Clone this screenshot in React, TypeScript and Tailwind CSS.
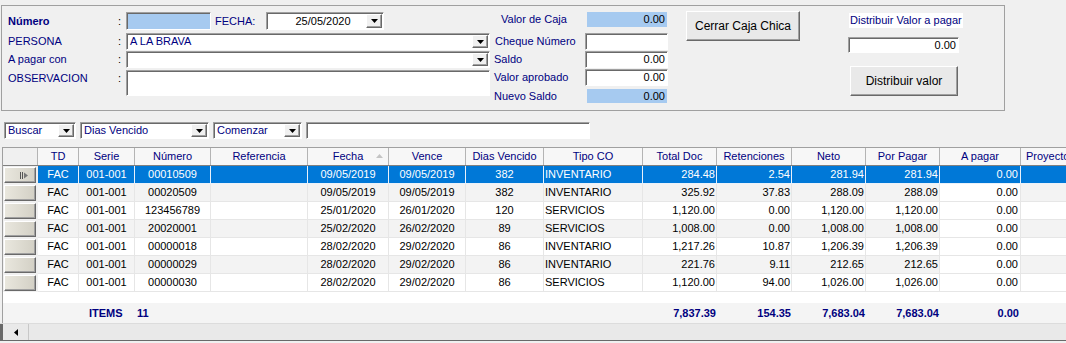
import React from "react";

const sunken =
  "border border-t-[#a0a0a0] border-l-[#a0a0a0] border-b-white border-r-white shadow-[inset_1px_1px_0_#696969]";
const raised =
  "border border-t-white border-l-white border-b-[#696969] border-r-[#696969] shadow-[inset_-1px_-1px_0_#a0a0a0]";

function DropBtn() {
  return (
    <span className={`flex h-full w-[16px] shrink-0 items-center justify-center bg-[#f0f0f0] ${raised}`}>
      <svg width="7" height="4" viewBox="0 0 7 4">
        <path d="M0 0h7L3.5 4z" fill="#000" />
      </svg>
    </span>
  );
}

function Combo({ w, value, tone = "text-[#000080]", center = false }: { w: string; value?: string; tone?: string; center?: boolean }) {
  return (
    <div className={`flex h-full ${w} items-stretch bg-white p-[1px] ${sunken}`}>
      <span className={`flex flex-1 items-center px-[2px] ${tone} ${center ? "justify-center" : ""}`}>{value}</span>
      <DropBtn />
    </div>
  );
}

type Col = { h: string; w: string; a: string };
const cols: Col[] = [
  { h: "", w: "w-[35px]", a: "" },
  { h: "TD", w: "w-[41px]", a: "justify-center" },
  { h: "Serie", w: "w-[56px]", a: "justify-center" },
  { h: "Número", w: "w-[76px]", a: "justify-center" },
  { h: "Referencia", w: "w-[97px]", a: "justify-start pl-[2px]" },
  { h: "Fecha", w: "w-[81px]", a: "justify-center" },
  { h: "Vence", w: "w-[77px]", a: "justify-center" },
  { h: "Dias Vencido", w: "w-[78px]", a: "justify-center" },
  { h: "Tipo CO", w: "w-[99px]", a: "justify-start pl-[1px]" },
  { h: "Total Doc", w: "w-[74px]", a: "justify-end pr-[1px]" },
  { h: "Retenciones", w: "w-[75px]", a: "justify-end pr-[1px]" },
  { h: "Neto", w: "w-[74px]", a: "justify-end pr-[1px]" },
  { h: "Por Pagar", w: "w-[74px]", a: "justify-end pr-[1px]" },
  { h: "A pagar", w: "w-[81px]", a: "justify-end pr-[2px]" },
  { h: "Proyecto", w: "w-[90px]", a: "justify-start pl-[2px]" },
];

const rows = [
  ["FAC", "001-001", "00010509", "", "09/05/2019", "09/05/2019", "382", "INVENTARIO", "284.48", "2.54", "281.94", "281.94", "0.00", ""],
  ["FAC", "001-001", "00020509", "", "09/05/2019", "09/05/2019", "382", "INVENTARIO", "325.92", "37.83", "288.09", "288.09", "0.00", ""],
  ["FAC", "001-001", "123456789", "", "25/01/2020", "26/01/2020", "120", "SERVICIOS", "1,120.00", "0.00", "1,120.00", "1,120.00", "0.00", ""],
  ["FAC", "001-001", "20020001", "", "25/02/2020", "26/02/2020", "89", "SERVICIOS", "1,008.00", "0.00", "1,008.00", "1,008.00", "0.00", ""],
  ["FAC", "001-001", "00000018", "", "28/02/2020", "29/02/2020", "86", "INVENTARIO", "1,217.26", "10.87", "1,206.39", "1,206.39", "0.00", ""],
  ["FAC", "001-001", "00000029", "", "28/02/2020", "29/02/2020", "86", "INVENTARIO", "221.76", "9.11", "212.65", "212.65", "0.00", ""],
  ["FAC", "001-001", "00000030", "", "28/02/2020", "29/02/2020", "86", "SERVICIOS", "1,120.00", "94.00", "1,026.00", "1,026.00", "0.00", ""],
];

// footer cells from Referencia onwards
const totals = ["", "", "", "", "", "7,837.39", "154.35", "7,683.04", "7,683.04", "0.00", ""];

function RowSelector({ current }: { current?: boolean }) {
  return (
    <div className="flex h-full w-[35px] shrink-0 items-center py-[1px] pl-[1px] pr-[2px]">
      <div className={`flex h-full flex-1 items-center justify-end bg-gradient-to-r from-[#e9e7de] to-[#d3d0c5] pr-[6px] ${raised}`}>
        {current && (
          <svg width="9" height="7" viewBox="0 0 9 7">
            <path d="M0.5 0v7M2.5 0v7" stroke="#555" strokeWidth="1" />
            <path d="M4 0.5l4 3-4 3z" fill="#777" />
          </svg>
        )}
      </div>
    </div>
  );
}

export default function App() {
  return (
    <div className="h-[343px] w-[1066px] overflow-hidden bg-[#f0f0f0] font-['Liberation_Sans',Arial,sans-serif] text-[11px] leading-none text-black">
      {/* top panel */}
      <div className="ml-[1px] mt-[5px] flex h-[106px] w-[1004px] border border-[#a0a0a0]">
        <div className="flex w-[490px] shrink-0 flex-col pl-[6px] pt-[6px]">
          <div className="flex h-[18px] items-center">
            <span className="w-[110px] font-bold text-[#000080]">Número</span>
            <span className="w-[8px] text-black">:</span>
            <div className={`h-full w-[85px] bg-[#a6caf0] ${sunken}`} />
            <span className="ml-[4px] w-[51px] text-[#000080]">FECHA:</span>
            <Combo w="w-[118px]" value="25/05/2020" tone="text-black pl-[14px]" center />
          </div>
          <div className="mt-[3px] flex h-[17px] items-center">
            <span className="w-[110px] text-[#000080]">PERSONA</span>
            <span className="w-[8px]">:</span>
            <Combo w="w-[364px]" value="A LA BRAVA" />
          </div>
          <div className="mt-[1px] flex h-[17px] items-center">
            <span className="w-[110px] text-[#000080]">A pagar con</span>
            <span className="w-[8px]">:</span>
            <Combo w="w-[364px]" />
          </div>
          <div className="mt-[2px] flex h-[26px] items-start">
            <span className="mt-[3px] w-[110px] text-[#000080]">OBSERVACION</span>
            <span className="mt-[3px] w-[8px]">:</span>
            <div className={`h-full w-[364px] bg-white ${sunken}`} />
          </div>
        </div>

        <div className="flex w-[194px] shrink-0 flex-col pt-[6px] text-[#000080]">
          <div className="flex h-[15px] items-center">
            <span className="w-[95px] pl-[9px]">Valor de Caja</span>
            <span className="flex h-full w-[80px] items-center justify-end bg-[#a6caf0] pr-[2px] text-black">0.00</span>
          </div>
          <div className="mt-[6px] flex h-[17px] items-center">
            <span className="w-[93px] pl-[3px]">Cheque Número</span>
            <div className={`h-full w-[83px] bg-white ${sunken}`} />
          </div>
          <div className="mt-[1px] flex h-[17px] items-center">
            <span className="w-[93px] pl-[2px]">Saldo</span>
            <span className={`flex h-full w-[83px] items-center justify-end bg-white pr-[2px] text-black ${sunken}`}>0.00</span>
          </div>
          <div className="mt-[1px] flex h-[17px] items-center">
            <span className="w-[93px] pl-[2px]">Valor aprobado</span>
            <span className={`flex h-full w-[83px] items-center justify-end bg-white pr-[2px] text-black ${sunken}`}>0.00</span>
          </div>
          <div className="mt-[3px] flex h-[14px] items-center">
            <span className="w-[95px] pl-[2px]">Nuevo Saldo</span>
            <span className="flex h-full w-[80px] items-center justify-end bg-[#a6caf0] pr-[2px] text-black">0.00</span>
          </div>
        </div>

        <div className="w-[162px] shrink-0 pt-[5px]">
          <button className={`flex h-[30px] w-[114px] items-center justify-center bg-[#e9e9e9] text-[12px] text-black ${raised}`}>
            Cerrar Caja Chica
          </button>
        </div>

        <div className="flex w-[120px] shrink-0 flex-col pt-[7px]">
          <span className="ml-[1px] flex h-[15px] w-fit items-center bg-white px-[1px] text-[#000080]">Distribuir Valor a pagar</span>
          <span className={`mt-[9px] flex h-[16px] w-[111px] items-center justify-end bg-white pr-[2px] ${sunken}`}>0.00</span>
          <button className={`ml-[2px] mt-[13px] flex h-[30px] w-[108px] items-center justify-center bg-[#e9e9e9] text-[12px] text-black ${raised}`}>
            Distribuir valor
          </button>
        </div>
      </div>

      {/* filter row */}
      <div className="mt-[11px] flex h-[17px] gap-[4px] pl-[4px]">
        <Combo w="w-[72px]" value="Buscar" />
        <Combo w="w-[129px]" value="Dias Vencido" />
        <Combo w="w-[89px]" value="Comenzar" />
        <div className={`h-full w-[284px] bg-white ${sunken}`} />
      </div>

      {/* grid */}
      <div className="mt-[8px] flex h-[194px] flex-col">
        <div className="ml-[2px] flex flex-1 flex-col border-l border-t border-[#a0a0a0] bg-white">
          <div className="flex h-[18px] border-b border-[#808080] bg-[#f7f7f7] text-[#000080]">
            {cols.map((c, i) => (
              <div
                key={i}
                className={`relative flex h-full shrink-0 items-center whitespace-nowrap border-r border-[#b4b4b4] ${c.w} ${i === 0 ? "bg-[#f0f0f0]" : ""} ${c.h === "Proyecto" ? "justify-start pl-[5px]" : "justify-center"}`}
              >
                {c.h}
                {c.h === "Fecha" && (
                  <svg className="absolute right-[5px] top-[6px]" width="7" height="4" viewBox="0 0 7 4">
                    <path d="M0 4h7L3.5 0z" fill="#c4c4c4" />
                  </svg>
                )}
              </div>
            ))}
          </div>

          {rows.map((r, ri) => {
            const sel = ri === 0;
            const base = sel ? "bg-[#0078d7] text-white" : ri % 2 === 1 ? "bg-[#f3f3f3]" : "bg-white";
            return (
              <div key={ri} className="flex h-[18px]">
                <div className="bg-[#f0f0f0]">
                  <RowSelector current={sel} />
                </div>
                {r.map((v, ci) => {
                  const c = cols[ci + 1];
                  const bg = !sel && ci === 12 ? "bg-white" : base;
                  return (
                    <div key={ci} className={`flex h-full shrink-0 items-center whitespace-nowrap border-b border-r ${sel ? "border-[#e9f1fa]" : "border-[#e6e6e6]"} ${c.w} ${c.a} ${bg}`}>
                      {v}
                    </div>
                  );
                })}
              </div>
            );
          })}

          <div className="h-[11px] bg-white" />

          <div className="flex h-[20px] bg-[#f4f4f4] font-bold text-[#000080]">
            <div className="w-[35px] shrink-0" />
            <div className="w-[41px] shrink-0" />
            <div className="flex w-[56px] shrink-0 items-center pl-[10px]">ITEMS</div>
            <div className="flex w-[76px] shrink-0 items-center pl-[2px]">11</div>
            {totals.map((v, i) => (
              <div key={i} className={`flex h-full shrink-0 items-center ${cols[i + 4].w} ${cols[i + 4].a}`}>
                {v}
              </div>
            ))}
          </div>
        </div>

        <div className="flex h-[17px] border-t border-[#dcdcdc] bg-[#e9e9e9]">
          <div className="w-[3px] bg-[#696969]" />
          <div className="flex w-[26px] items-center justify-center border-r border-[#c8c8c8]">
            <svg width="4" height="7" viewBox="0 0 4 7">
              <path d="M4 0v7L0 3.5z" fill="#000" />
            </svg>
          </div>
          <div className="flex-1" />
        </div>
        <div className="h-[1px] bg-[#696969]" />
      </div>
    </div>
  );
}
